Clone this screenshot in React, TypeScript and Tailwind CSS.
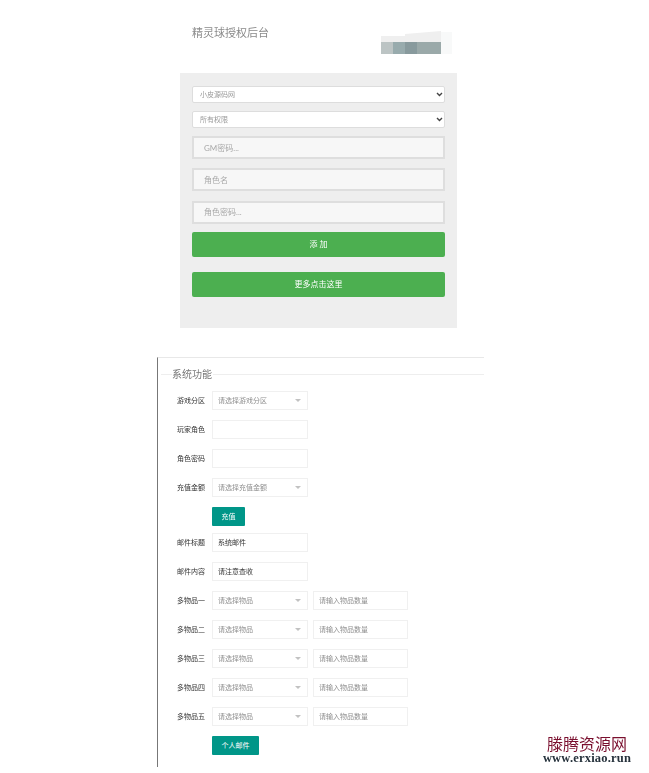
const cjk = "font-['Lato','Noto_Sans_CJK_SC',sans-serif]";

function LoginInput({ placeholder }: { placeholder: string }) {
  return (
    <input
      placeholder={placeholder}
      className="block h-[23px] w-full border-2 border-[#dedede] bg-[#f7f7f7] px-[10px] text-[8px] outline-none placeholder:text-[#a8a8a8]"
    />
  );
}

function LoginSelect({ label }: { label: string }) {
  return (
    <div className="relative">
      <select className="block h-[17px] w-full appearance-none rounded-[2px] border border-[#dddddd] bg-white pl-[7px] text-[7px] text-[#9a9a9a] outline-none">
        <option>{label}</option>
      </select>
      <svg width="7" height="5" viewBox="0 0 7 5" fill="none" className="absolute top-[6px] right-[2px]">
        <path d="M1 1l2.5 2.5L6 1" stroke="#444444" strokeWidth="1.4" />
      </svg>
    </div>
  );
}

function FakeSelect({ label }: { label: string }) {
  return (
    <div className="flex h-[19px] w-[96px] items-center justify-between border border-[#f0f0f0] bg-white pl-[5px] pr-[6px] text-[7px] text-[#8f8f8f]">
      <span>{label}</span>
      <span className="h-0 w-0 border-x-[3px] border-t-[3px] border-x-transparent border-t-[#c2c2c2]" />
    </div>
  );
}

function Row({ label, children }: { label: string; children: React.ReactNode }) {
  return (
    <div className="flex h-[19px] items-center">
      <label className="w-[35px] text-[7px] text-[#333333]">{label}</label>
      {children}
    </div>
  );
}

function TextBox({ value, placeholder, className = "w-[96px]" }: { value?: string; placeholder?: string; className?: string }) {
  return (
    <input
      readOnly
      value={value}
      placeholder={placeholder}
      className={`block h-[19px] border border-[#f0f0f0] bg-white px-[5px] pb-[2px] text-[7px] text-[#333333] outline-none placeholder:text-[#8f8f8f] ${className}`}
    />
  );
}

const items = ["多物品一", "多物品二", "多物品三", "多物品四", "多物品五"];

export default function App() {
  return (
    <div className={`relative h-[773px] w-[649px] overflow-hidden bg-white ${cjk}`}>
      <div className="blur-[0.3px]">
        <div className="ml-[180px] w-[277px]">
          <div className="flex h-[73px] items-start justify-between pl-[12px] pr-[4px]">
            <h1 className="pt-[25px] text-[11px] leading-[16px] font-normal text-[#8a8a8a]">精灵球授权后台</h1>
            <svg width="72" height="24" viewBox="0 0 72 24" className="mt-[31px]">
              <rect x="60" y="1" width="11" height="22" fill="#f8f9f9" />
              <polygon points="0,5 24,5 24,3 60,0 60,11 0,11" fill="#efefef" />
              <rect x="0" y="11" width="12" height="12" fill="#bcc4c4" />
              <rect x="12" y="11" width="12" height="12" fill="#98abad" />
              <rect x="24" y="11" width="12" height="12" fill="#889a9d" />
              <rect x="36" y="11" width="24" height="12" fill="#9aa9a9" />
            </svg>
          </div>
          <div className="flex h-[255px] flex-col bg-[#eeeeee] px-[12px] pt-[13px]">
            <div className="flex flex-col gap-[8px]">
              <LoginSelect label="小皮源码网" />
              <LoginSelect label="所有权限" />
            </div>
            <div className="mt-[8px] flex flex-col gap-[9.4px]">
              <LoginInput placeholder="GM密码..." />
              <LoginInput placeholder="角色名" />
              <LoginInput placeholder="角色密码..." />
            </div>
            <button className="mt-[8px] h-[25px] rounded-[2px] bg-[#4caf50] text-[8px] text-white">添 加</button>
            <button className="mt-[15px] h-[25px] rounded-[2px] bg-[#4caf50] text-[8px] text-white">更多点击这里</button>
          </div>
        </div>

        <div className="mt-[29px] ml-[157px] h-[410px] w-[327px] border-t border-l border-t-[#e8e8e8] border-l-[#777777]">
          <div className="flex items-center pt-[9px] pl-[3px]">
            <span className="h-px w-[11px] bg-[#eeeeee]" />
            <span className="text-[10px] leading-[14px] text-[#777777]">系统功能</span>
            <span className="ml-[1px] h-px flex-1 bg-[#eeeeee]" />
          </div>
          <div className="flex flex-col gap-[10px] pt-[10px] pl-[19px]">
            <Row label="游戏分区">
              <FakeSelect label="请选择游戏分区" />
            </Row>
            <Row label="玩家角色">
              <TextBox />
            </Row>
            <Row label="角色密码">
              <TextBox />
            </Row>
            <Row label="充值金额">
              <FakeSelect label="请选择充值金额" />
            </Row>
            <div className="flex pl-[35px]">
              <button className="h-[19px] w-[33px] rounded-[1px] bg-[#009688] text-[7px] text-white">充值</button>
            </div>
            <div className="-mt-[3px]">
              <Row label="邮件标题">
                <TextBox value="系统邮件" />
              </Row>
            </div>
            <Row label="邮件内容">
              <TextBox value="请注意查收" />
            </Row>
            {items.map((name) => (
              <Row key={name} label={name}>
                <FakeSelect label="请选择物品" />
                <TextBox placeholder="请输入物品数量" className="ml-[5px] w-[95px]" />
              </Row>
            ))}
            <div className="flex pl-[35px]">
              <button className="h-[19px] w-[47px] rounded-[1px] bg-[#009688] text-[7px] text-white">个人邮件</button>
            </div>
          </div>
        </div>
      </div>

      {/* site watermark over the screenshot */}
      <div className="absolute top-[736px] left-[542px] w-[90px] text-center">
        <div className="text-[16px] leading-[16px] text-[#7a0f2e]">滕腾资源网</div>
        <div className="font-['Liberation_Serif',serif] text-[12.5px] leading-[13px] font-bold tracking-[0.2px] text-[#26323c]">
          www.erxiao.run
        </div>
      </div>
    </div>
  );
}
